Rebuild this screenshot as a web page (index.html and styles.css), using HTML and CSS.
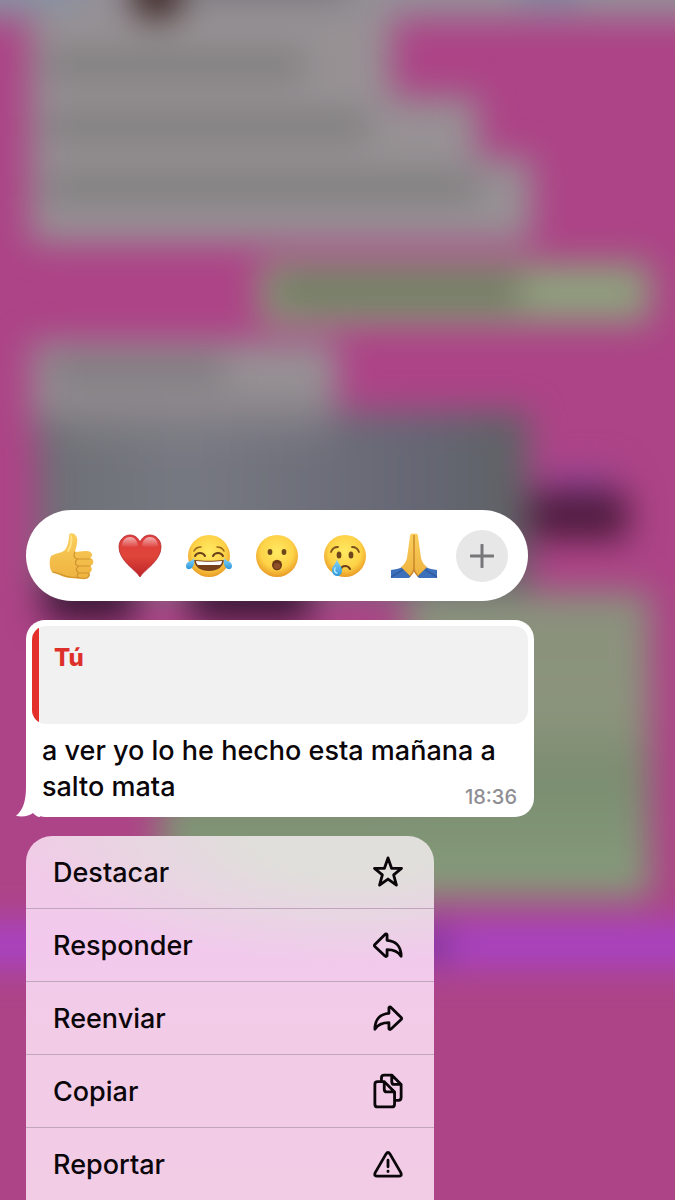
FILE: index.html
```html
<!DOCTYPE html>
<html lang="es">
<head>
    <meta charset="UTF-8">
    <meta name="viewport" content="width=device-width, initial-scale=1.0">
    <title>Chat</title>
    <link rel="stylesheet" href="styles.css">
</head>
<body>
    <!-- chat desenfocado detrás del menú -->
    <svg class="backdrop" viewBox="0 0 675 1200" preserveAspectRatio="none" aria-hidden="true">
        <defs>
            <filter id="soft" filterUnits="userSpaceOnUse" x="-80" y="-80" width="840" height="1360" color-interpolation-filters="sRGB">
                <feGaussianBlur stdDeviation="17"/>
            </filter>
            <linearGradient id="photo" x1="0" y1="0" x2="1" y2="0">
                <stop offset="0" stop-color="#6c6f74"/>
                <stop offset="0.3" stop-color="#777982"/>
                <stop offset="0.8" stop-color="#656673"/>
                <stop offset="1" stop-color="#5d6262"/>
            </linearGradient>
            <linearGradient id="green" x1="0" y1="0" x2="0" y2="1">
                <stop offset="0" stop-color="#8a917d"/>
                <stop offset="0.4" stop-color="#8b947c"/>
                <stop offset="0.6" stop-color="#7b8d70"/>
                <stop offset="1" stop-color="#869d7c"/>
            </linearGradient>
        </defs>
        <rect width="675" height="1200" fill="#ad4487"/>
        <g filter="url(#soft)">
            <rect x="-80" y="-80" width="840" height="98" fill="#949098"/>
            <rect x="-80" y="-80" width="160" height="90" fill="#8791a3"/>
            <rect x="520" y="-80" width="60" height="88" fill="#8484a0"/>
            <path d="M30 10H392V97H478V158H532V243H30Z" fill="#979194"/>
            <circle cx="157" cy="-6" r="26" fill="#38201e"/>
            <rect x="190" y="-30" width="160" height="30" fill="#77777a"/>
            <path d="M45 52H305V78H45ZM45 113H370V139H45ZM45 174H480V200H45Z" fill="#7c7c7c"/>
            <rect x="260" y="263" width="390" height="60" fill="#8e9f7d"/>
            <rect x="275" y="278" width="245" height="26" fill="#66735a"/>
            <rect x="32" y="342" width="305" height="90" fill="#979194"/>
            <rect x="50" y="358" width="175" height="24" fill="#7a787b"/>
            <rect x="38" y="412" width="490" height="182" fill="url(#photo)"/>
            <path d="M60 390H330V440H60Z" fill="#89848a" opacity="0.5"/>
            <rect x="545" y="470" width="70" height="30" fill="#924494"/>
            <rect x="530" y="492" width="98" height="48" fill="#4c1b3d"/>
            <path d="M45 575H135V622H45ZM190 575H310V622H190Z" fill="#3a1535"/>
            <path d="M405 592H650V898H160V790H405Z" fill="url(#green)"/>
            <rect x="-80" y="922" width="840" height="46" fill="#a842c4"/>
            <rect x="400" y="930" width="50" height="30" fill="#7c3499"/>
        </g>
    </svg>

    <main class="overlay">
        <div class="reactions" role="group" aria-label="Reacciones">
            <button class="reaction" type="button" aria-label="Me gusta">
                <svg viewBox="0 0 48 48">
                    <defs>
                        <linearGradient id="skin" x1="0" y1="0" x2="0" y2="1">
                            <stop offset="0" stop-color="#fbcf5d"/>
                            <stop offset="1" stop-color="#eeb23f"/>
                        </linearGradient>
                    </defs>
                    <path d="M3 24C8 21 14 21 17 18C20 14 21 8 21 3C22 0 28 1 29 6C30 11 28 15 27 20L37 19C44 18 46 24 42 26C47 27 46 33 42 34C45 36 44 40 41 41C43 45 39 48 34 47L22 46C16 46 12 42 5 41C1 38 1 28 3 24Z" fill="url(#skin)"/>
                    <path d="M5 40C12 41 16 45 22 45L34 46C39 47 42 45 41 41M27 20C25 23 26 27 30 27H42M30 27C26 29 27 34 31 34H42M31 34C27 36 28 40 31 41H41M31 41C28 43 29 46 32 46" fill="none" stroke="#d1932f" stroke-width="1.2" stroke-linecap="round"/>
                    <path d="M23 4C24 9 23 14 20 19" fill="none" stroke="#ffe184" stroke-width="2" stroke-linecap="round"/>
                </svg>
            </button>
            <button class="reaction" type="button" aria-label="Me encanta">
                <svg viewBox="0 0 48 48">
                    <defs>
                        <linearGradient id="heart" x1="0" y1="0" x2="0" y2="1">
                            <stop offset="0" stop-color="#dd3b3b"/>
                            <stop offset="0.5" stop-color="#e0453a"/>
                            <stop offset="1" stop-color="#bd2428"/>
                        </linearGradient>
                        <linearGradient id="shine" x1="0" y1="0" x2="0" y2="1">
                            <stop offset="0" stop-color="#fff" stop-opacity="0.6"/>
                            <stop offset="1" stop-color="#fff" stop-opacity="0"/>
                        </linearGradient>
                    </defs>
                    <path d="M24 45C20 38 3 29 3 15C3 8 8 3 14 3C19 3 22 6 24 10C26 6 29 3 34 3C40 3 45 8 45 15C45 29 28 38 24 45Z" fill="url(#heart)" stroke="#b62a2c" stroke-width="0.8"/>
                    <path d="M6 14C6 8 10 5 14 5C19 5 22 10 22 14C17 16 11 16 6 14ZM26 14C26 10 29 5 34 5C38 5 42 8 42 14C37 16 31 16 26 14Z" fill="url(#shine)"/>
                </svg>
            </button>
            <button class="reaction" type="button" aria-label="Me divierte">
                <svg viewBox="0 0 48 48">
                    <defs>
                        <radialGradient id="face" cx="0.5" cy="0.4" r="0.6">
                            <stop offset="0" stop-color="#ffea62"/>
                            <stop offset="0.65" stop-color="#fdd248"/>
                            <stop offset="1" stop-color="#e99a25"/>
                        </radialGradient>
                        <linearGradient id="tear" x1="0" y1="0" x2="0" y2="1">
                            <stop offset="0" stop-color="#8bd8f8"/>
                            <stop offset="1" stop-color="#2d97dd"/>
                        </linearGradient>
                    </defs>
                    <circle cx="24" cy="24" r="21" fill="url(#face)"/>
                    <path d="M9 19C10 17 13 15 16 15M32 15C35 15 38 17 39 19" fill="none" stroke="#9a641c" stroke-width="1.6" stroke-linecap="round"/>
                    <path d="M10 24C12 20 18 20 20 24M28 24C30 20 36 20 38 24" fill="none" stroke="#68401a" stroke-width="2" stroke-linecap="round"/>
                    <path d="M9 28C18 29 30 29 39 28C38 35 33 39 24 39C15 39 10 35 9 28Z" fill="#76401c"/>
                    <path d="M11 29C19 30 29 30 37 29C37 31 36 32 35 33H13C12 32 11 31 11 29Z" fill="#fff"/>
                    <path d="M9 26C10 32 8 36 5 37C1 38 0 34 2 31C4 29 7 29 9 26ZM39 26C38 32 40 36 43 37C47 38 48 34 46 31C44 29 41 29 39 26Z" fill="url(#tear)"/>
                </svg>
            </button>
            <button class="reaction" type="button" aria-label="Me asombra">
                <svg viewBox="0 0 48 48">
                    <circle cx="24" cy="24" r="21" fill="url(#face)"/>
                    <ellipse cx="17" cy="20" rx="2.4" ry="3" fill="#6d471b"/>
                    <ellipse cx="31" cy="20" rx="2.4" ry="3" fill="#6d471b"/>
                    <ellipse cx="24" cy="33" rx="5" ry="5.2" fill="#6d3a17"/>
                    <ellipse cx="24" cy="34" rx="3.4" ry="3" fill="#8e5129"/>
                </svg>
            </button>
            <button class="reaction" type="button" aria-label="Me entristece">
                <svg viewBox="0 0 48 48">
                    <circle cx="24" cy="24" r="21" fill="url(#face)"/>
                    <path d="M10 20C11 17 14 15 17 15M31 15C34 15 37 17 38 20" fill="none" stroke="#7d511d" stroke-width="1.8" stroke-linecap="round"/>
                    <ellipse cx="18" cy="23" rx="2.4" ry="3.6" fill="#6d471b"/>
                    <ellipse cx="30" cy="23" rx="2.4" ry="3.6" fill="#6d471b"/>
                    <path d="M20 37C21 33 27 33 29 37" fill="none" stroke="#6d3f18" stroke-width="2" stroke-linecap="round"/>
                    <path d="M16 27C17 32 21 34 21 38C21 42 19 44 16 44C13 44 11 41 11 38C11 34 15 32 16 27Z" fill="url(#tear)"/>
                    <path d="M14 36C13 39 14 41 16 41" fill="none" stroke="#bcecff" stroke-width="1.4" stroke-linecap="round"/>
                </svg>
            </button>
            <button class="reaction" type="button" aria-label="Gracias">
                <svg viewBox="0 0 48 48">
                    <path d="M1 38C5 37 9 37 12 35L21 44L19 46H1ZM47 38C43 37 39 37 36 35L27 44L29 46H47Z" fill="#3d6fbb"/>
                    <path d="M1 45L14 37L20 44M47 45L34 37L28 44" fill="none" stroke="#2c579c" stroke-width="1.2"/>
                    <path d="M24 2C22 1 20 2 20 4C19 11 18 19 17 26C16 30 14 33 11 35L20 44C22 42 24 40 24 36ZM24 2C26 1 28 2 28 4C29 11 30 19 31 26C32 30 34 33 37 35L28 44C26 42 24 40 24 36Z" fill="url(#skin)"/>
                    <path d="M24 3V36M24 36C24 40 22 42 20 44M24 36C24 40 26 42 28 44" fill="none" stroke="#c78529" stroke-width="1.4"/>
                </svg>
            </button>
            <button class="reaction" type="button" aria-label="Más reacciones">
                <span class="more">
                    <svg viewBox="0 0 24 24"><path d="M12 1V23M1 12H23"/></svg>
                </span>
            </button>
        </div>

        <article class="bubble">
            <svg class="tail" viewBox="0 0 24 30" aria-hidden="true"><path d="M10 0C10 12 8 22 0 29C8 30 13 29 17 26C19 28 21 30 24 30V0Z"/></svg>
            <blockquote class="quote">
                <cite>Tú</cite>
            </blockquote>
            <p class="message">a ver yo lo he hecho esta mañana a salto mata <time datetime="18:36">18:36</time></p>
        </article>

        <div class="menu">
            <button type="button">
                Destacar
                <svg viewBox="0 0 32 36"><path d="M16 3L19.800 14L30.400 14.200L22 21L25 32L16 25.500L7 32L10 21L1.600 14.200L12.200 14Z"/></svg>
            </button>
            <button type="button">
                Responder
                <svg viewBox="0 0 32 36"><path d="M15 7V13C24 13.500 30 19 30 30C26.500 24.500 22 23 15 23V29.500Q14 31 12.500 29.500L2 19.500Q1 18.500 2 17.500L12.500 7Q14 5.500 15 7Z"/></svg>
            </button>
            <button type="button">
                Reenviar
                <svg viewBox="0 0 32 36"><path d="M17 7V13C8 13.500 2 19 2 30C5.500 24.500 10 23 17 23V29.500Q18 31 19.500 29.500L30 19.500Q31 18.500 30 17.500L19.500 7Q18 5.500 17 7Z"/></svg>
            </button>
            <button type="button">
                Copiar
                <svg viewBox="0 0 32 36"><path d="M9 8V4Q9 1 12 1H20L30 11V25Q30 28 27 28H23M20 1V8Q20 11 23 11H30M5 8H12L23 19V32Q23 35 20 35H5Q2 35 2 32V11Q2 8 5 8ZM12 8V16Q12 19 15 19H23"/></svg>
            </button>
            <button type="button">
                Reportar
                <svg viewBox="0 0 32 36"><path d="M13.800 7.500Q16 4 18.200 7.500L29.800 27.500Q31 31 27.500 31H4.500Q1 31 2.200 27.500ZM16 14V21M16 25.500V26"/></svg>
            </button>
        </div>
    </main>
</body>
</html>
```
FILE: styles.css
```css
*{
    margin: 0;
    padding: 0;
    box-sizing: border-box;
}
body{
    font-family: Inter, "Liberation Sans", sans-serif;
    background: #ad4487;
    color: #0b060a;
    overflow: hidden;
}
button{
    border: 0;
    background: none;
    font: inherit;
    color: inherit;
    cursor: pointer;
}
.backdrop{
    position: absolute;
    top: 0;
    left: 0;
    width: 100%;
    height: 100%;
}
.overlay{
    position: relative;
    height: 100vh;
    overflow: hidden;
    padding: 510px 26px 0;
    display: flex;
    flex-direction: column;
    align-items: flex-start;
    gap: 19px;
}
.overlay > *{
    flex-shrink: 0;
}

/* reacciones */
.reactions{
    width: 100%;
    max-width: 502px;
    padding: 19px 12px;
    border-radius: 46px;
    background: #fff;
    display: grid;
    grid-template-columns: repeat(7, 1fr);
}
.reaction{
    height: 53px;
    display: flex;
    align-items: center;
    justify-content: center;
}
.reaction svg{
    width: 48px;
    height: 48px;
}
.more{
    width: 52px;
    height: 52px;
    border-radius: 50%;
    background: #e7e7e8;
    display: flex;
    align-items: center;
    justify-content: center;
}
.more svg{
    width: 24px;
    height: 24px;
    stroke: #77777a;
    stroke-width: 3;
    stroke-linecap: round;
}

/* mensaje */
.bubble{
    position: relative;
    width: 100%;
    max-width: 508px;
    padding: 6px 6px 12px;
    border-radius: 19px;
    background: #fff;
}
.tail{
    position: absolute;
    left: -10px;
    bottom: 0;
    width: 24px;
    height: 30px;
    fill: #fff;
}
.quote{
    min-height: 98px;
    padding: 16px 22px;
    border-radius: 14px;
    background: linear-gradient(90deg, #e4302a 7px, #f1f1f1 7px);
}
.quote cite{
    font-size: 24px;
    line-height: 32px;
    font-weight: 800;
    font-style: normal;
    color: #de302b;
}
.message{
    margin-top: 9px;
    padding: 0 11px 0 10px;
    font-size: 27px;
    line-height: 36px;
    font-weight: 500;
}
.message time{
    float: right;
    margin-top: 20px;
    font-size: 20px;
    line-height: 16px;
    color: #8e8e93;
}

/* menú */
.menu{
    width: 100%;
    max-width: 408px;
    border-radius: 26px 26px 0 0;
    overflow: hidden;
    background:
        radial-gradient(ellipse 330px 130px at 80% 0, #e0dfdb 30%, transparent),
        linear-gradient(#f0cce6, #f2c9ed 110px, #f2cce7 190px, #f2cce5);
}
.menu button{
    width: 100%;
    height: 73px;
    padding: 0 31px 0 27px;
    border-bottom: 1px solid #bfa6bd;
    display: flex;
    align-items: center;
    justify-content: space-between;
    font-size: 27px;
    font-weight: 500;
    text-align: left;
}
.menu svg{
    width: 30px;
    height: 34px;
    overflow: visible;
    fill: none;
    stroke: #0b060a;
    stroke-width: 3;
    stroke-linecap: round;
    stroke-linejoin: round;
}
```
